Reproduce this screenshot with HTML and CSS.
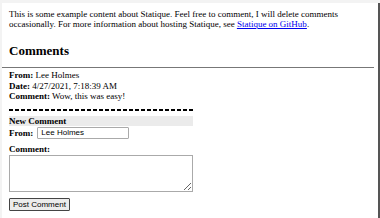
FILE: index.html
```html
<!DOCTYPE html>
<html lang="en">
<head>
    <meta charset="UTF-8">
    <title>Statique</title>
    <link rel="stylesheet" href="styles.css">
</head>
<body>
    <div class="frame">
        <div class="content">
            <p class="intro">This is some example content about Statique. Feel free to comment, I will delete comments occasionally. For more information about hosting Statique, see <a href="#">Statique on GitHub</a>.</p>

            <h2>Comments</h2>
            <hr class="rule">

            <div class="comment">
                <div><b>From:</b> Lee Holmes</div>
                <div><b>Date:</b> 4/27/2021, 7:18:39 AM</div>
                <div><b>Comment:</b> Wow, this was easy!</div>
            </div>
            <div class="dashes"></div>

            <form class="new-comment" onsubmit="return false">
                <div class="title">New Comment</div>
                <div class="from-row">
                    <b>From:</b>
                    <input type="text" value="Lee Holmes">
                </div>
                <div class="label"><b>Comment:</b></div>
                <textarea></textarea>
                <button type="submit">Post Comment</button>
            </form>
        </div>
    </div>
</body>
</html>
```

FILE: styles.css
```css
html, body {
    margin: 0;
    padding: 0;
    background: #f3f3f3;
}

.frame {
    margin: 3px 0 0 2px;
    height: 215px;
    width: 376px;
    background: #fff;
    border-right: 2px solid #555;
    overflow: hidden;
    font-family: "Liberation Serif", serif;
    font-size: 9px;
    color: #000;
}

.content {
    padding: 6px 0 0 7px;
}

.intro {
    margin: 0;
    line-height: 10px;
}

.intro a {
    color: #0000ee;
}

h2 {
    font-size: 13px;
    margin: 14px 0 8px;
    line-height: 16px;
}

.rule {
    margin: 0 4px 0 -8px;
    border: none;
    border-top: 1px solid #777;
}

.comment {
    margin-top: 2px;
    line-height: 10.5px;
}

/* the dashed divider under the existing comments */
.dashes {
    width: 184px;
    height: 2px;
    margin-top: 7px;
    background: repeating-linear-gradient(90deg, #000 0 4px, transparent 4px 6px);
}

.new-comment {
    width: 184px;
    margin-top: 5px;
}

.new-comment .title {
    background: #ebebeb;
    font-weight: bold;
    line-height: 10px;
}

.from-row {
    margin-top: 1px;
    display: flex;
    align-items: center;
    gap: 4px;
}

.from-row input {
    box-sizing: border-box;
    width: 92px;
    height: 12px;
    padding: 0 3px;
    border: 1px solid #aaa;
    border-radius: 1px;
    font-family: "Liberation Sans", sans-serif;
    font-size: 8px;
}

.label {
    margin-top: 5px;
    line-height: 10px;
}

textarea {
    display: block;
    box-sizing: border-box;
    width: 184px;
    height: 37px;
    padding: 2px;
    margin: 1px 0 6px;
    border: 1px solid #aaa;
    resize: vertical;
}

button {
    display: block;
    font-family: "Liberation Sans", sans-serif;
    font-size: 8px;
    height: 13px;
    padding: 0 3px;
    border: 1px solid #444;
    background: #ececec;
    border-radius: 1px;
}
```
